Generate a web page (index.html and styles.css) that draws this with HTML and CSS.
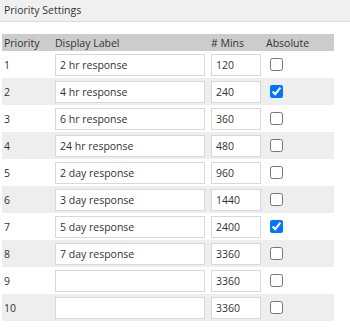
FILE: index.html
```html
<!DOCTYPE html>
<html>
  <head>
    <title>Priority Settings</title>
    <link rel="stylesheet" href="styles.css">
  </head>
  <body>
    <div class="panel_title">Priority Settings</div>
    <table class="priority_table">
      <thead>
        <tr>
          <th class="col_priority">Priority</th>
          <th class="col_label">Display Label</th>
          <th class="col_mins"># Mins</th>
          <th class="col_absolute">Absolute</th>
        </tr>
      </thead>
      <tbody>
        <tr><td>1</td><td><input class="label_field" type="text" value="2 hr response"></td><td><input class="mins_field" type="text" value="120"></td><td><input type="checkbox"></td></tr>
        <tr><td>2</td><td><input class="label_field" type="text" value="4 hr response"></td><td><input class="mins_field" type="text" value="240"></td><td><input type="checkbox" checked></td></tr>
        <tr><td>3</td><td><input class="label_field" type="text" value="6 hr response"></td><td><input class="mins_field" type="text" value="360"></td><td><input type="checkbox"></td></tr>
        <tr><td>4</td><td><input class="label_field" type="text" value="24 hr response"></td><td><input class="mins_field" type="text" value="480"></td><td><input type="checkbox"></td></tr>
        <tr><td>5</td><td><input class="label_field" type="text" value="2 day response"></td><td><input class="mins_field" type="text" value="960"></td><td><input type="checkbox"></td></tr>
        <tr><td>6</td><td><input class="label_field" type="text" value="3 day response"></td><td><input class="mins_field" type="text" value="1440"></td><td><input type="checkbox"></td></tr>
        <tr><td>7</td><td><input class="label_field" type="text" value="5 day response"></td><td><input class="mins_field" type="text" value="2400"></td><td><input type="checkbox" checked></td></tr>
        <tr><td>8</td><td><input class="label_field" type="text" value="7 day response"></td><td><input class="mins_field" type="text" value="3360"></td><td><input type="checkbox"></td></tr>
        <tr><td>9</td><td><input class="label_field" type="text" value=""></td><td><input class="mins_field" type="text" value="3360"></td><td><input type="checkbox"></td></tr>
        <tr><td>10</td><td><input class="label_field" type="text" value=""></td><td><input class="mins_field" type="text" value="3360"></td><td><input type="checkbox"></td></tr>
      </tbody>
    </table>
  </body>
</html>
```

FILE: styles.css
```css
body
  {
  margin: 0;
  font-family: "Open Sans", "Noto Sans", sans-serif;
  font-size: 10.5px;
  color: #333333;
  background: #ffffff;
  }

.panel_title
  {
  height: 21px;
  line-height: 21px;
  padding-left: 4px;
  background: #f0f0f0;
  border-bottom: 1px solid #dddddd;
  }

.priority_table
  {
  margin: 12px 0 0 2px;
  border-collapse: collapse;
  table-layout: fixed;
  width: 332px;
  }

.priority_table th
  {
  height: 17px;
  padding: 0 0 0 2px;
  background: #cccccc;
  font-weight: normal;
  text-align: left;
  }

.priority_table td
  {
  height: 27px;
  padding: 0 0 0 2px;
  }

.priority_table tbody tr:nth-child(even)
  {
  background: #eeeeee;
  }

.col_priority { width: 49px; }
.col_label { width: 154px; }
.col_mins { width: 53px; }
.col_absolute { width: 68px; }

.label_field,
.mins_field
  {
  box-sizing: border-box;
  height: 22px;
  margin: 0;
  padding: 0 0 0 4px;
  border: 1px solid #d8d8d8;
  font-family: inherit;
  font-size: inherit;
  color: #333333;
  display: block;
  }

.label_field { width: 150px; }
.mins_field { width: 50px; }

.priority_table input[type="checkbox"]
  {
  margin: 0 0 0 4px;
  width: 13px;
  height: 13px;
  display: block;
  }
```
